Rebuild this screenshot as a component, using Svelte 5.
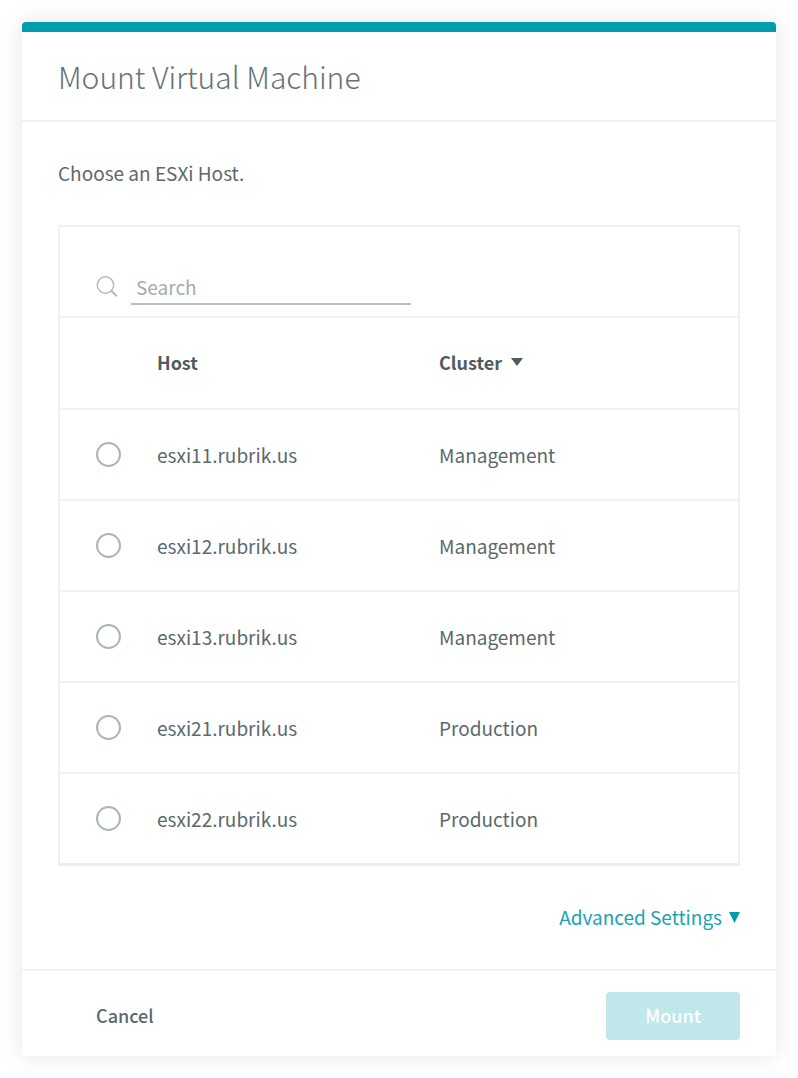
<script>
  const hosts = [
    { name: 'esxi11.rubrik.us', cluster: 'Management' },
    { name: 'esxi12.rubrik.us', cluster: 'Management' },
    { name: 'esxi13.rubrik.us', cluster: 'Management' },
    { name: 'esxi21.rubrik.us', cluster: 'Production' },
    { name: 'esxi22.rubrik.us', cluster: 'Production' }
  ];
  let selected = $state('');
</script>

<main>
  <form class="dialog">
    <header><h1>Mount Virtual Machine</h1></header>
    <section class="body">
      <p>Choose an ESXi Host.</p>
      <div class="panel">
        <div class="search">
          <svg width="22" height="22" viewBox="0 0 22 22" fill="none" stroke="#b4b9ba" stroke-width="1.5" aria-hidden="true">
            <circle cx="9.5" cy="9" r="8.2" />
            <path d="M15 14.5L20.7 20.2" stroke-width="2" />
          </svg>
          <input type="text" placeholder="Search" aria-label="Search" />
        </div>
        <table>
          <thead>
            <tr>
              <th class="pick"></th>
              <th class="host">Host</th>
              <th>
                <button type="button" class="sort">Cluster
                  <svg width="12" height="8" viewBox="0 0 12 8" aria-hidden="true"><path d="M0 0H12L6 8Z" fill="currentColor" /></svg>
                </button>
              </th>
            </tr>
          </thead>
          <tbody>
            {#each hosts as host}
              <tr>
                <td class="pick"><input type="radio" name="host" id={host.name} value={host.name} bind:group={selected} /></td>
                <td><label for={host.name}>{host.name}</label></td>
                <td>{host.cluster}</td>
              </tr>
            {/each}
          </tbody>
        </table>
      </div>
      <button type="button" class="advanced">Advanced Settings
        <svg width="11" height="11" viewBox="0 0 11 11" aria-hidden="true"><path d="M0 0H11L5.5 11Z" fill="#009cb0" /></svg>
      </button>
    </section>
    <footer>
      <button type="button" class="cancel">Cancel</button>
      <button type="submit" class="mount" disabled>Mount</button>
    </footer>
  </form>
</main>

<style>
  :global(body) { background: #fff; }
  main {
    padding: 22px;
    font-family: "Noto Sans CJK SC", "Noto Sans", sans-serif;
    font-size: 19px;
    line-height: 30px;
    color: #5b696d;
  }
  .dialog {
    border-top: 10px solid #009dae;
    border-radius: 4px;
    box-shadow: 0 0 24px rgba(0, 0, 0, 0.1);
    background: #fff;
  }
  header { padding: 22px; padding-left: 36px; border-bottom: 2px solid #f1f2f2; }
  h1 { margin: 0; font-size: 30px; font-weight: 300; line-height: 44px; color: #667377; }
  .body { display: flex; flex-direction: column; padding: 36px; }
  p { margin: 0 0 37px; }
  .panel { border: 2px solid #eff0f1; border-bottom: 3px solid #eceeee; }
  .search { display: flex; align-items: center; gap: 13px; padding: 42px 36px 11px; }
  .search input {
    width: 280px; height: 36px; box-sizing: border-box; padding: 0 5px; border: 0;
    border-bottom: 2px solid #b9c0c4; background: none; font: inherit; color: inherit;
  }
  .search input::placeholder { color: #a2acb2; opacity: 1; }
  table { width: 100%; border-spacing: 0; table-layout: fixed; }
  th, td { height: 89px; padding: 0; border-top: 2px solid #f0f1f2; text-align: left; }
  th { height: 88px; padding-bottom: 2px; font-size: 18px; color: #4e5c60; }
  .pick { width: 97px; }
  .host { width: 282px; }
  .pick input {
    appearance: none; display: block; width: 25px; height: 25px; margin: 0 0 0 36px;
    border: 2px solid #abb5b9; border-radius: 50%; background: #fff;
  }
  .pick input:checked { background: #009cb0; box-shadow: inset 0 0 0 4px #fff; }
  button { padding: 0; border: 0; background: none; font: inherit; color: inherit; cursor: pointer; }
  .sort { display: flex; align-items: center; gap: 9px; }
  .advanced { display: flex; align-items: center; align-self: flex-end; gap: 7px; margin-top: 36px; margin-bottom: 1px; color: #1ba3b3; }
  footer { display: flex; align-items: center; justify-content: space-between; padding: 21px 36px 16px 74px; border-top: 2px solid #f1f2f2; }
  .cancel, .mount { padding-bottom: 3px; font-size: 18px; font-weight: 500; }
  .mount { width: 134px; height: 48px; border-radius: 4px; background: #c0e7ea; color: #fff; }
</style>
